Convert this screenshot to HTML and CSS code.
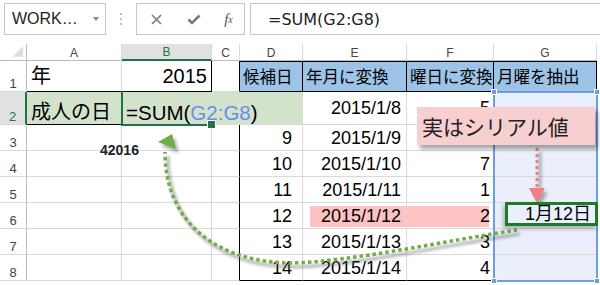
FILE: index.html
```html
<!DOCTYPE html>
<html lang="ja">
<head>
  <meta charset="UTF-8">
  <title>成人の日</title>
  <link rel="stylesheet" href="styles.css">
</head>
<body>

  <div class="fbar">
    <div class="namebox"><span>WORK…</span><span class="drop"></span></div>
    <div class="grip">
      <svg width="4" height="14" viewBox="0 0 4 14"><circle cx="2" cy="2" r="1.1"/><circle cx="2" cy="7" r="1.1"/><circle cx="2" cy="12" r="1.1"/></svg>
    </div>
    <div class="btns">
      <span class="btn"><svg width="11" height="11" viewBox="0 0 11 11"><path d="M1 1L10 10M10 1L1 10" stroke="#7a7a7a" stroke-width="1.6" fill="none"/></svg></span>
      <span class="btn"><svg width="14" height="11" viewBox="0 0 14 11"><path d="M1.5 5.5L5 9L12.5 1.5" stroke="#7a7a7a" stroke-width="2.6" fill="none"/></svg></span>
      <span class="btn fx">f<sub>x</sub></span>
    </div>
    <div class="formula">=SUM(G2:G8)</div>
  </div>

  <div class="sheet">
    <!-- column headers -->
    <div class="ch corner"><svg width="27" height="17" viewBox="0 0 27 17"><polygon points="24,3 24,14 13,14" fill="#dcdcdc"/></svg></div>
    <div class="ch">A</div>
    <div class="ch hl">B</div>
    <div class="ch">C</div>
    <div class="ch">D</div>
    <div class="ch">E</div>
    <div class="ch">F</div>
    <div class="ch">G</div>

    <!-- row 1 -->
    <div class="rh">1</div>
    <div class="c big bb">年</div>
    <div class="c big r bb br">2015</div>
    <div class="c br"></div>
    <div class="c th">候補日</div>
    <div class="c th">年月に変換</div>
    <div class="c th">曜日に変換</div>
    <div class="c th">月曜を抽出</div>

    <!-- row 2 -->
    <div class="rh sel">2</div>
    <div class="c big low fill bb">成人の日</div>
    <div class="c big low fill nbr edit">=SUM(<span class="ref">G2:G8</span>)<i class="caret"></i></div>
    <div class="c fill nbr"></div>
    <div class="c fill"></div>
    <div class="c r e">2015/1/8</div>
    <div class="c r f">5</div>
    <div class="c gsel"></div>

    <!-- row 3 -->
    <div class="rh">3</div>
    <div class="c"></div>
    <div class="c"></div>
    <div class="c br"></div>
    <div class="c r d">9</div>
    <div class="c r e">2015/1/9</div>
    <div class="c r f"></div>
    <div class="c gsel"></div>

    <!-- row 4 -->
    <div class="rh">4</div>
    <div class="c"></div>
    <div class="c"></div>
    <div class="c br"></div>
    <div class="c r d">10</div>
    <div class="c r e">2015/1/10</div>
    <div class="c r f">7</div>
    <div class="c gsel"></div>

    <!-- row 5 -->
    <div class="rh">5</div>
    <div class="c"></div>
    <div class="c"></div>
    <div class="c br"></div>
    <div class="c r d">11</div>
    <div class="c r e">2015/1/11</div>
    <div class="c r f">1</div>
    <div class="c gsel"></div>

    <!-- row 6 -->
    <div class="rh">6</div>
    <div class="c"></div>
    <div class="c"></div>
    <div class="c br"></div>
    <div class="c r d">12</div>
    <div class="c r e pink-e">2015/1/12</div>
    <div class="c r f pink-f">2</div>
    <div class="c gsel"></div>

    <!-- row 7 -->
    <div class="rh">7</div>
    <div class="c"></div>
    <div class="c"></div>
    <div class="c br"></div>
    <div class="c r d">13</div>
    <div class="c r e">2015/1/13</div>
    <div class="c r f">3</div>
    <div class="c gsel"></div>

    <!-- row 8 -->
    <div class="rh">8</div>
    <div class="c"></div>
    <div class="c"></div>
    <div class="c br"></div>
    <div class="c r d bb">14</div>
    <div class="c r e bb">2015/1/14</div>
    <div class="c r f bb">4</div>
    <div class="c gsel bb"></div>
  </div>

  <!-- selections and drawn shapes -->
  <div class="gframe">
    <span class="hd tl"></span><span class="hd tr"></span><span class="hd bl"></span><span class="hd brc"></span>
  </div>
  <div class="active"></div>

  <svg class="ink" width="600" height="285" viewBox="0 0 600 285">
    <defs>
      <filter id="soft" x="-20%" y="-20%" width="140%" height="140%"><feGaussianBlur stdDeviation="1.8"/></filter>
    </defs>
    <g filter="url(#soft)" transform="translate(3 4)" opacity="0.45">
      <path d="M517 230 C450 240 350 262 290 263 C220 262 165 225 165 152" fill="none" stroke="#555" stroke-width="3"/>
      <polygon points="158,142 172,134 176,149" fill="#555"/>
      <line x1="537" y1="148" x2="537" y2="189" stroke="#555" stroke-width="3"/>
      <polygon points="529,188 545,188 537,203" fill="#555"/>
    </g>
    <path d="M517 230 C450 240 350 262 290 263 C220 262 165 225 165 152" fill="none" stroke="#70ad47" stroke-width="3.5" stroke-dasharray="3.5 3"/>
    <polygon points="158,142 172,134 176,149" fill="#70ad47"/>
    <line x1="537" y1="148" x2="537" y2="189" stroke="#ec7e82" stroke-width="3" stroke-dasharray="3 3"/>
    <polygon points="529,188 545,188 537,203" fill="#ef7f84"/>
  </svg>

  <div class="num">42016</div>
  <div class="mark">1月12日</div>
  <div class="note">実はシリアル値</div>

</body>
</html>
```

FILE: styles.css
```css
* {
  box-sizing: border-box;
}

body {
  margin: 0;
  width: 600px;
  height: 285px;
  overflow: hidden;
  position: relative;
  background: #fff;
  color: #000;
  font-family: "Liberation Sans", "Noto Sans CJK JP", sans-serif;
}

/* formula bar */
.fbar {
  display: flex;
  height: 32px;
  margin-top: 3px;
  padding-left: 4px;
}

.namebox {
  width: 102px;
  border: 1px solid #c6c6c6;
  display: flex;
  align-items: center;
  padding-left: 7px;
  font-size: 16px;
  color: #222;
}

.drop {
  margin-left: auto;
  margin-right: 6px;
  border-left: 3.5px solid transparent;
  border-right: 3.5px solid transparent;
  border-top: 4px solid #8a8a8a;
}

.grip {
  width: 30px;
  display: flex;
  align-items: center;
  justify-content: center;
  fill: #b4b4b4;
}

.btns {
  width: 109px;
  border: 1px solid #c6c6c6;
  display: flex;
  align-items: center;
}

.btn {
  width: 38px;
  display: flex;
  justify-content: center;
  align-items: center;
}

.fx {
  width: 31px;
  font-family: "Liberation Serif", serif;
  font-style: italic;
  font-size: 15px;
  color: #555;
}

.fx sub {
  font-size: 10px;
  vertical-align: -2px;
}

.formula {
  flex: 1;
  margin-left: 5px;
  border: 1px solid #c6c6c6;
  border-right: 0;
  padding-left: 17px;
  display: flex;
  align-items: center;
  font-family: "DejaVu Sans", sans-serif;
  font-size: 16px;
  color: #222;
}

/* sheet grid */
.sheet {
  display: grid;
  grid-template-columns: 27px 95px 90px 28px 63px 104px 87px 103px;
  grid-template-rows: 17px 31px 33px repeat(6, 26px);
  margin-top: 9px;
}

.ch {
  border-right: 1px solid #dadada;
  border-bottom: 1px solid #bcbcbc;
  display: flex;
  justify-content: center;
  align-items: flex-end;
  font-size: 12px;
  line-height: 14px;
  color: #444;
}

.ch.corner {
  border-right-color: #bcbcbc;
}

.ch.hl {
  background: #e1e1e1;
  color: #217346;
  border-bottom: 2px solid #217346;
}

.rh {
  border-right: 1px solid #bcbcbc;
  border-bottom: 1px solid #dadada;
  display: flex;
  justify-content: center;
  align-items: flex-end;
  font-size: 13px;
  line-height: 15px;
  color: #444;
}

.rh.sel {
  background: #e1e1e1;
  color: #217346;
  border-right: 2px solid #217346;
}

.c {
  border-right: 1px solid #d9d9d9;
  border-bottom: 1px solid #d9d9d9;
  display: flex;
  align-items: center;
  padding: 0 4px;
  font-size: 18px;
  line-height: 20px;
  white-space: nowrap;
}

.r {
  justify-content: flex-end;
}

.big {
  font-size: 20px;
  line-height: 23px;
}

.low {
  align-items: flex-end;
}

/* the formula being typed runs over C2 and D2 */
.edit {
  position: relative;
  z-index: 1;
  font-size: 20.5px;
}

.bb {
  border-bottom-color: #000;
}

.br {
  border-right-color: #000;
}

.nbr {
  border-right-color: transparent;
}

.th {
  background: #9dc3e6;
  border-top: 1px solid #000;
  border-right-color: #000;
  border-bottom-color: #000;
  font-size: 16.5px;
  padding-left: 3px;
}

.fill {
  background: #d2e2cb;
}

.d {
  padding-right: 10px;
}

.e {
  padding-right: 5px;
}

.f {
  padding-right: 3px;
}

.gsel {
  background: #eaeffb;
}

.pink-e {
  background: linear-gradient(#ffc2c2, #ffc2c2) 7px 3px / calc(100% - 7px) 21px no-repeat;
}

.pink-f {
  background: linear-gradient(#ffc2c2, #ffc2c2) 0 3px / calc(100% - 4px) 21px no-repeat;
}

.ref {
  color: #6a8ee8;
}

.caret {
  display: inline-block;
  width: 1px;
  height: 25px;
  margin-left: 2px;
  background: #111;
  vertical-align: -3px;
}

/* overlays */
.gframe,
.active,
.ink,
.num,
.mark,
.note {
  position: absolute;
  z-index: 2;
}

.gframe {
  left: 493px;
  top: 91px;
  width: 105px;
  height: 191px;
  border: 2px solid #6e9de8;
}

.hd {
  position: absolute;
  width: 6px;
  height: 6px;
  background: #6e9de8;
  border: 1px solid #fff;
}

.hd.tl { left: -4px; top: -4px; }
.hd.tr { right: -4px; top: -4px; }
.hd.bl { left: -4px; bottom: -4px; }
.hd.brc { right: -4px; bottom: -4px; }

.active {
  left: 121px;
  top: 91px;
  width: 91px;
  height: 35px;
  border-left: 2px solid #217346;
  border-bottom: 2px solid #217346;
}

.active::after {
  content: "";
  position: absolute;
  right: -4px;
  bottom: -5px;
  width: 7px;
  height: 7px;
  background: #217346;
  border: 1px solid #fff;
}

.ink {
  left: 0;
  top: 0;
  pointer-events: none;
}

.num {
  left: 100px;
  top: 143px;
  font-size: 14px;
  line-height: 15px;
  font-weight: bold;
  color: #222;
}

.mark {
  left: 505px;
  top: 202px;
  width: 93px;
  height: 24px;
  border: 3px solid #1d7a27;
  padding-right: 4px;
  text-align: right;
  font-size: 18px;
  line-height: 18px;
  box-shadow: -2px 3px 4px rgba(0, 0, 0, 0.25);
}

.note {
  left: 417px;
  top: 107px;
  width: 178px;
  height: 38px;
  display: flex;
  align-items: center;
  padding-left: 5px;
  background: #f7cfd0;
  color: #222;
  font-family: "Noto Sans CJK JP", sans-serif;
  font-size: 21px;
  box-shadow: 3px 4px 4px rgba(0, 0, 0, 0.35);
}
```
